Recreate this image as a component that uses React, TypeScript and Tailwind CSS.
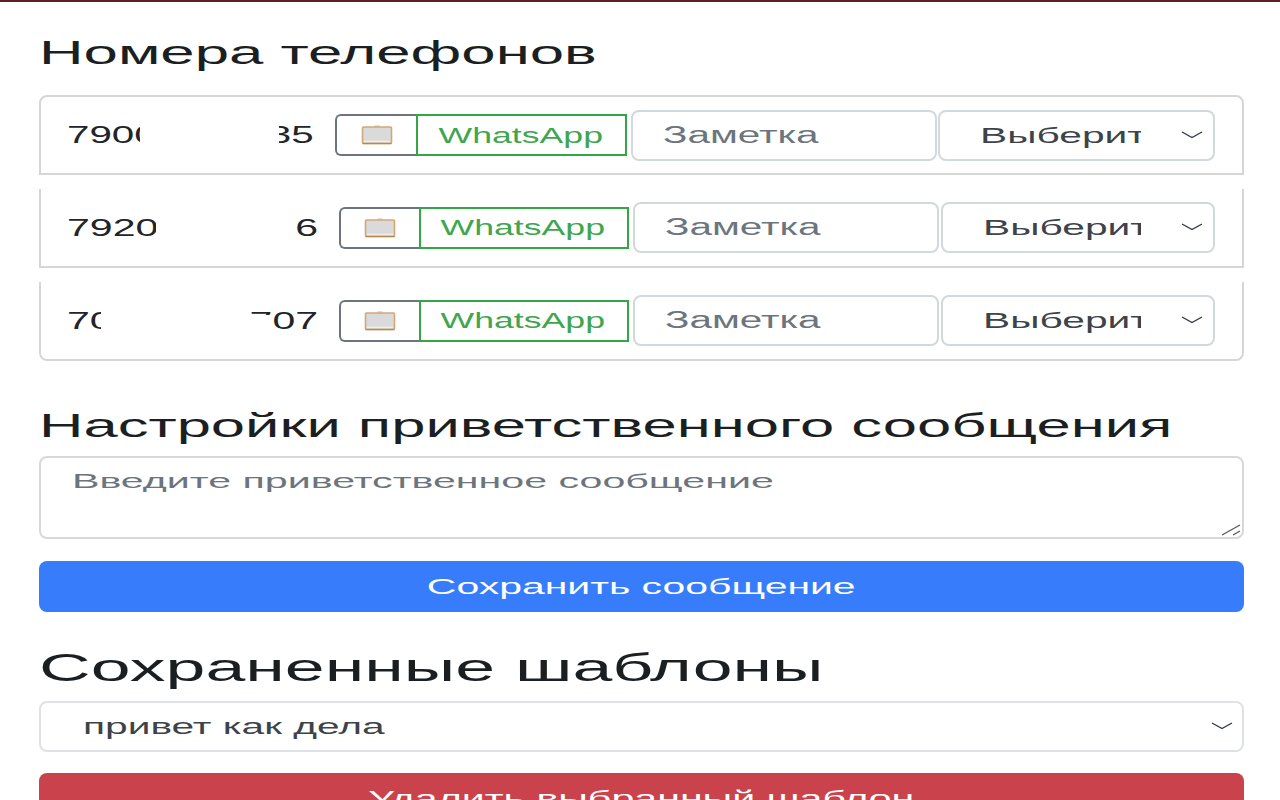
import React from 'react';

const rows = [
  {
    phone: '79000000035',
    bar: 'h-[80px] rounded-t-lg border-t-2',
    gap: '',
    phoneCol: 'w-[268px]',
    phoneScale: 'scale-x-[1.68]',
    copy: 'w-[81px]',
    wa: 'w-[211px]',
    note: 'w-[306px] ml-[4px]',
    pick: 'w-[277px] ml-[1px]',
    clip: 'w-[161px]',
    hide: 'left-[73px] w-[139px]',
    partial: '',
  },
  {
    phone: '79200000006',
    bar: 'h-[79px]',
    gap: 'mt-[14px]',
    phoneCol: 'w-[272px]',
    phoneScale: 'scale-x-[1.71]',
    copy: 'w-[80px]',
    wa: 'w-[210px]',
    note: 'w-[306px] ml-[4px]',
    pick: 'w-[274px] ml-[2px]',
    clip: 'w-[158px]',
    hide: 'left-[89px] w-[139px]',
    partial: '',
  },
  {
    phone: '70000000707',
    bar: 'h-[79px] rounded-b-lg',
    gap: 'mt-[14px]',
    phoneCol: 'w-[272px]',
    phoneScale: 'scale-x-[1.71]',
    copy: 'w-[80px]',
    wa: 'w-[210px]',
    note: 'w-[306px] ml-[4px]',
    pick: 'w-[274px] ml-[2px]',
    clip: 'w-[158px]',
    hide: 'left-[34px] w-[148px]',
    partial: 'left-[182px] w-[22px] top-[14px] h-[26px]',
  },
];

const ClipboardIcon = () => (
  <svg width="32" height="22" viewBox="0 0 32 22">
    <rect x="13" y="1" width="6" height="3" rx="1.5" fill="#dedede" />
    <rect x="1.5" y="3" width="29" height="16.5" rx="1" fill="#dadada" stroke="#cfa876" strokeWidth="1.6" />
    <line x1="3" y1="17.5" x2="29" y2="17.5" stroke="#f0f0f0" strokeWidth="1.5" />
    <line x1="1.5" y1="19.5" x2="30.5" y2="19.5" stroke="#b98a50" strokeWidth="1.4" />
  </svg>
);

const Chevron = () => (
  <svg width="22" height="8" viewBox="0 0 22 8" fill="none" stroke="#343a40" strokeWidth="1.4">
    <path d="M1 1l10 5.5L21 1" />
  </svg>
);

export default function App() {
  return (
    <div className="w-[1280px] h-[800px] overflow-hidden bg-white border-t-2 border-[#5c1f26] pl-[39px] font-['Liberation_Sans',Arial,sans-serif]">
      <div className="w-[1205px]">
        <h2 className="h-[93px] pt-[31px] text-[33px] leading-[40px] text-[#1c1f22]">
          <span className="inline-block origin-left scale-x-[1.87]">Номера телефонов</span>
        </h2>

        {rows.map((row) => (
          <div
            key={row.phone}
            className={`flex items-center border-x-2 border-b-2 border-[#d6d6d6] pl-[26px] ${row.bar} ${row.gap}`}
          >
            <div className={`relative h-[40px] overflow-hidden text-[24px] leading-[40px] text-[#212529] shrink-0 ${row.phoneCol}`}>
              <span className={`inline-block origin-left whitespace-nowrap ${row.phoneScale}`}>{row.phone}</span>
              <div className={`absolute top-0 h-[40px] bg-white ${row.hide}`} />
              {row.partial && <div className={`absolute bg-white ${row.partial}`} />}
            </div>
            <div className={`h-[42px] shrink-0 flex items-center justify-center border-2 border-r-0 border-[#6c757d] rounded-l-md ${row.copy}`}>
              <ClipboardIcon />
            </div>
            <div className={`h-[42px] shrink-0 flex items-center justify-center border-2 border-[#34a745] text-[22px] text-[#3fa64f] ${row.wa}`}>
              <span className="inline-block -translate-x-[1px] scale-x-[1.62]">WhatsApp</span>
            </div>
            <div className={`h-[51px] shrink-0 flex items-center pl-[30px] border-2 border-[#d3d8dd] rounded-lg text-[23px] text-[#6c757d] ${row.note}`}>
              <span className="inline-block origin-left scale-x-[1.76]">Заметка</span>
            </div>
            <div className={`relative h-[51px] shrink-0 flex items-center border-2 border-[#d3d8dd] rounded-lg text-[22px] text-[#3d4348] pl-[40px] ${row.pick}`}>
              <div className={`overflow-hidden whitespace-nowrap ${row.clip}`}>
                <span className="inline-block origin-left scale-x-[1.85]">Выберите</span>
              </div>
              <div className="absolute right-[10px] top-[19px]">
                <Chevron />
              </div>
            </div>
          </div>
        ))}

        <h2 className="mt-[43px] h-[44px] text-[33px] leading-[44px] text-[#1c1f22]">
          <span className="inline-block origin-left scale-x-[1.865] whitespace-nowrap">Настройки приветственного сообщения</span>
        </h2>
        <div className="relative mt-[8px] h-[83px] rounded-lg border-2 border-[#d6d9dc] pl-[31px] pt-[7px] text-[21px] leading-[32px] text-[#6c757d]">
          <span className="inline-block origin-left scale-x-[1.96] whitespace-nowrap">Введите приветственное сообщение</span>
          <svg className="absolute right-[1px] bottom-[1px]" width="20" height="12" viewBox="0 0 20 12" fill="none" stroke="#555" strokeWidth="1.2">
            <path d="M1 11L19 1M12 11l7-4" />
          </svg>
        </div>
        <div className="mt-[22px] h-[51px] rounded-lg bg-[#377dfb] flex items-center justify-center text-[22px] text-white">
          <span className="inline-block scale-x-[1.86] whitespace-nowrap">Сохранить сообщение</span>
        </div>

        <h2 className="mt-[33px] h-[46px] text-[38px] leading-[46px] text-[#1c1f22]">
          <span className="inline-block origin-left scale-x-[1.885] whitespace-nowrap">Сохраненные шаблоны</span>
        </h2>
        <div className="relative mt-[10px] h-[51px] flex items-center rounded-lg border-2 border-[#dfe2e5] pl-[42px] text-[22px] text-[#3d4348]">
          <span className="inline-block origin-left scale-x-[1.85] whitespace-nowrap">привет как дела</span>
          <div className="absolute right-[9px] top-[19px]">
            <Chevron />
          </div>
        </div>
        <div className="mt-[21px] h-[51px] rounded-t-lg bg-[#ca424b] flex items-center justify-center text-[22px] text-white">
          <span className="inline-block scale-x-[1.87] whitespace-nowrap">Удалить выбранный шаблон</span>
        </div>
      </div>
    </div>
  );
}
